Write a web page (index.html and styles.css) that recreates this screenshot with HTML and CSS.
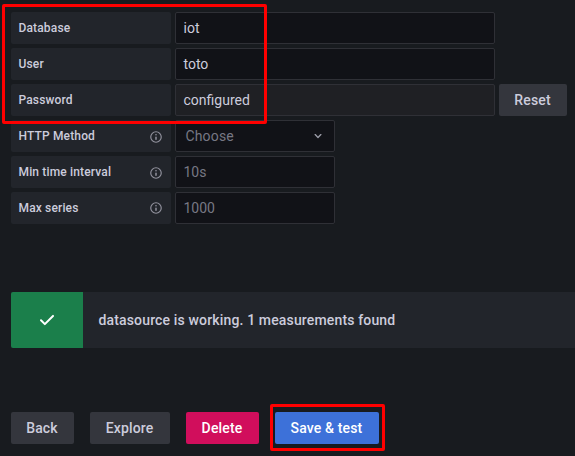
FILE: index.html
```
<!DOCTYPE html>
<html lang="en">
<head>
<meta charset="utf-8">
<title>Data source settings</title>
<link rel="stylesheet" href="styles.css">
</head>
<body>
<svg class="defs" width="0" height="0" aria-hidden="true">
  <symbol id="info" viewBox="0 0 24 24"><path d="M12 2a10 10 0 1 0 0 20 10 10 0 0 0 0-20Zm0 18a8 8 0 1 1 0-16 8 8 0 0 1 0 16Zm0-9a1.3 1.3 0 0 0-1.3 1.3v3.4a1.3 1.3 0 0 0 2.6 0v-3.4A1.3 1.3 0 0 0 12 11Zm0-4.3a1.4 1.4 0 1 0 0 2.8 1.4 1.4 0 0 0 0-2.8Z"/></symbol>
</svg>
<main class="page">
  <form class="form">
    <div class="row"><label class="label">Database</label><div class="input wide">iot</div></div>
    <div class="row"><label class="label">User</label><div class="input wide">toto</div></div>
    <div class="row"><label class="label">Password</label><div class="input wide disabled">configured</div><button type="button" class="btn secondary">Reset</button></div>
    <div class="row"><label class="label">HTTP Method<svg class="info"><use href="#info"/></svg></label><div class="input select placeholder">Choose<svg class="chevron" viewBox="0 0 24 24"><path d="M17 9.17a1 1 0 0 0-1.41 0L12 12.71 8.46 9.17a1 1 0 0 0-1.41 1.42l4.24 4.24a1 1 0 0 0 1.42 0L17 10.59a1 1 0 0 0 0-1.42Z"/></svg></div></div>
    <div class="row"><label class="label">Min time interval<svg class="info"><use href="#info"/></svg></label><div class="input placeholder">10s</div></div>
    <div class="row"><label class="label">Max series<svg class="info last"><use href="#info"/></svg></label><div class="input placeholder">1000</div></div>
  </form>
  <div class="alert">
    <div class="alert-icon"><svg class="check" viewBox="0 0 24 24"><path d="M18.71 7.21a1 1 0 0 0-1.42 0l-7.45 7.46-3.13-3.14A1 1 0 1 0 5.29 13l3.84 3.84a1 1 0 0 0 1.42 0l8.16-8.16a1 1 0 0 0 0-1.47Z"/></svg></div>
    <div class="alert-text">datasource is working. 1 measurements found</div>
  </div>
  <div class="actions">
    <button class="btn secondary back">Back</button>
    <button class="btn secondary explore">Explore</button>
    <button class="btn danger">Delete</button>
    <button class="btn primary">Save &amp; test</button>
  </div>
</main>
<div class="highlight fields"></div>
<div class="highlight save"></div>
</body>
</html>
```
FILE: styles.css
```
* { box-sizing: border-box; }
body {
  margin: 0;
  height: 456px;
  overflow: hidden;
  position: relative;
  background: #181b1f;
  color: #ccccdc;
  font: 14px/22px Roboto, sans-serif;
  letter-spacing: 0.15px;
}
.defs { position: absolute; }
.page { padding: 12px 0 0 11px; }
.form { display: flex; flex-direction: column; gap: 4px; }
.row { display: flex; gap: 4px; height: 32px; }
.label {
  display: flex;
  align-items: center;
  justify-content: space-between;
  width: 160px;
  padding: 0 8px 0 7.5px;
  border-radius: 2px;
  background: #22252b;
  font-size: 12px;
  font-weight: 500;
  letter-spacing: 0.15px;
}
.info { width: 14px; height: 14px; margin-top: 2px; fill: #92929e; }
.last { margin-top: 0; }
.input {
  display: flex;
  align-items: center;
  width: 160px;
  padding: 0 8px 0 7.5px;
  border: 1px solid #2f3036;
  border-radius: 2px;
  background: #111217;
  letter-spacing: 0;
}
.wide { width: 320px; }
.disabled { background: #1f2024; }
.placeholder { color: #777884; }
.select { justify-content: space-between; padding-left: 9.5px; letter-spacing: 0.15px; }
.chevron { width: 16px; height: 16px; fill: #9c9da8; }
.btn {
  height: 32px;
  padding: 0 16px 0 15px;
  border: 0;
  border-radius: 2px;
  color: #ccccdc;
  font: 500 14px/32px Roboto, sans-serif;
  letter-spacing: 0.15px;
  white-space: nowrap;
}
.row .btn { width: 68px; }
.secondary { background: #34363d; }
.danger { width: 73px; background: #d10e5c; color: #fff; }
.primary { width: 104px; background: #3d71d9; color: #fff; }
.back { width: 63px; }
.explore { width: 80px; }
.alert {
  display: flex;
  height: 56px;
  margin-top: 68px;
  border-radius: 2px 0 0 2px;
  background: #22252b;
  overflow: hidden;
}
.alert-icon {
  display: flex;
  align-items: center;
  justify-content: center;
  width: 72px;
  background: #1b7f4b;
}
.check { width: 24px; height: 24px; fill: #fff; }
.alert-text { padding-left: 15.5px; line-height: 56px; font-weight: 500; }
.actions { display: flex; gap: 16px; margin-top: 64px; }
.highlight { position: absolute; border: 3px solid #f00; border-radius: 2px; }
.fields { left: 2px; top: 4px; width: 265px; height: 120px; }
.save { left: 270px; top: 404px; width: 115px; height: 47px; }
```
